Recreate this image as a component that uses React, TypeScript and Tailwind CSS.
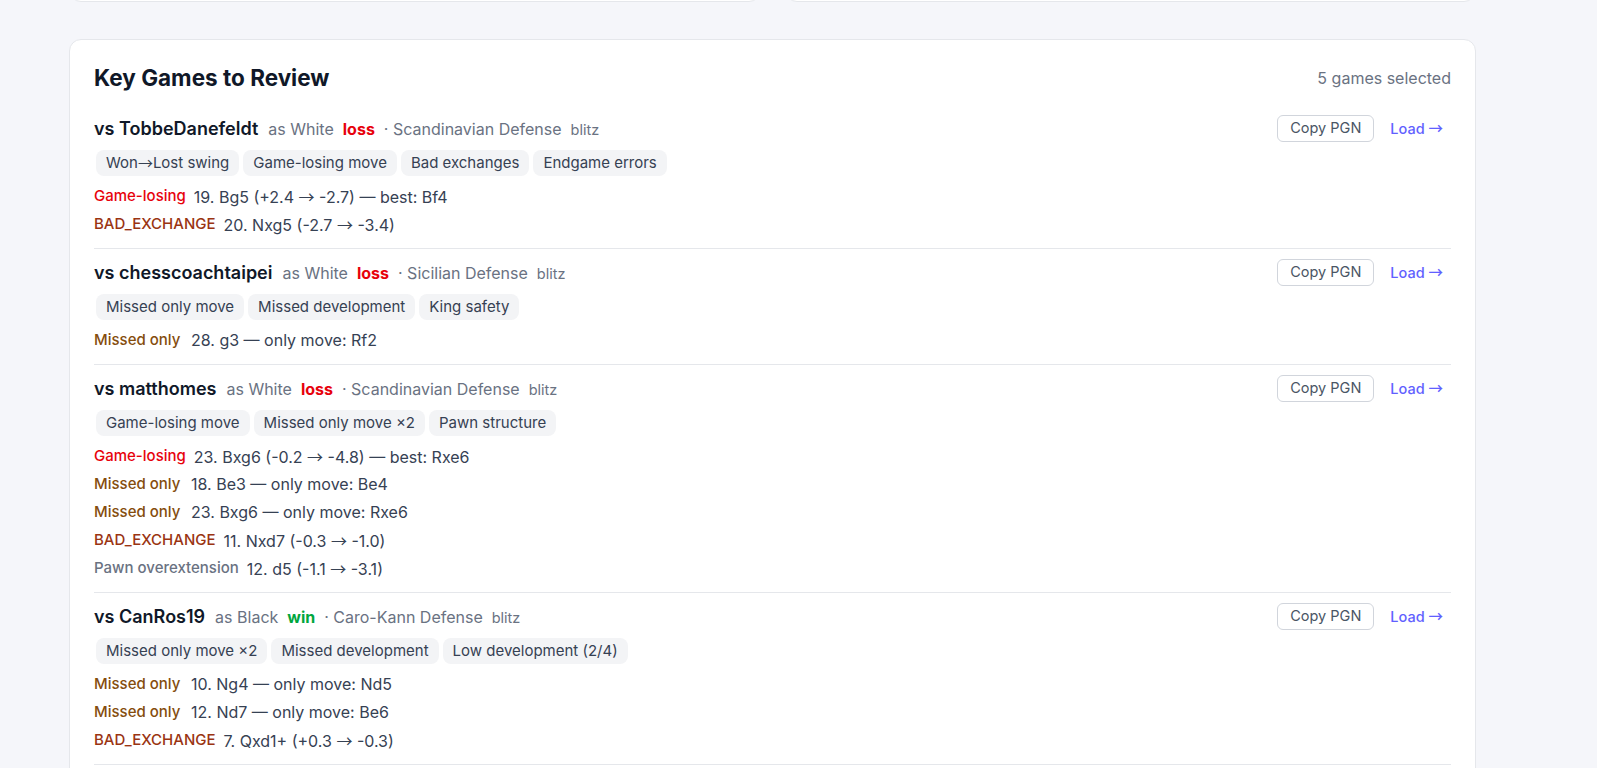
import React from "react";

type Line = { label: string; cls: string; text: string };
type Game = {
  opp: string;
  color: string;
  result: "loss" | "win";
  opening: string;
  speed: string;
  tags: string[];
  lines: Line[];
};

const GL = "text-red-600";
const BX = "text-[#9a3412]";
const MO = "text-[#854d0e]";
const PO = "text-gray-500";

const games: Game[] = [
  {
    opp: "TobbeDanefeldt",
    color: "White",
    result: "loss",
    opening: "Scandinavian Defense",
    speed: "blitz",
    tags: ["Won→Lost swing", "Game-losing move", "Bad exchanges", "Endgame errors"],
    lines: [
      { label: "Game-losing", cls: GL, text: "19. Bg5 (+2.4 → -2.7) — best: Bf4" },
      { label: "BAD_EXCHANGE", cls: BX, text: "20. Nxg5 (-2.7 → -3.4)" },
    ],
  },
  {
    opp: "chesscoachtaipei",
    color: "White",
    result: "loss",
    opening: "Sicilian Defense",
    speed: "blitz",
    tags: ["Missed only move", "Missed development", "King safety"],
    lines: [{ label: "Missed only", cls: MO, text: "28. g3 — only move: Rf2" }],
  },
  {
    opp: "matthomes",
    color: "White",
    result: "loss",
    opening: "Scandinavian Defense",
    speed: "blitz",
    tags: ["Game-losing move", "Missed only move ×2", "Pawn structure"],
    lines: [
      { label: "Game-losing", cls: GL, text: "23. Bxg6 (-0.2 → -4.8) — best: Rxe6" },
      { label: "Missed only", cls: MO, text: "18. Be3 — only move: Be4" },
      { label: "Missed only", cls: MO, text: "23. Bxg6 — only move: Rxe6" },
      { label: "BAD_EXCHANGE", cls: BX, text: "11. Nxd7 (-0.3 → -1.0)" },
      { label: "Pawn overextension", cls: PO, text: "12. d5 (-1.1 → -3.1)" },
    ],
  },
  {
    opp: "CanRos19",
    color: "Black",
    result: "win",
    opening: "Caro-Kann Defense",
    speed: "blitz",
    tags: ["Missed only move ×2", "Missed development", "Low development (2/4)"],
    lines: [
      { label: "Missed only", cls: MO, text: "10. Ng4 — only move: Nd5" },
      { label: "Missed only", cls: MO, text: "12. Nd7 — only move: Be6" },
      { label: "BAD_EXCHANGE", cls: BX, text: "7. Qxd1+ (+0.3 → -0.3)" },
    ],
  },
];

const ARROW_FONT = "'Noto Sans CJK JP', sans-serif";

function WithArrows({ text }: { text: string }) {
  const parts = text.split("→");
  return (
    <>
      {parts.map((p, i) => (
        <React.Fragment key={i}>
          {p}
          {i < parts.length - 1 && <span style={{ fontFamily: ARROW_FONT }}>→</span>}
        </React.Fragment>
      ))}
    </>
  );
}

function GameRow({ g }: { g: Game }) {
  return (
    <div className="border-b border-gray-200 pt-[9px] pb-3">
      <div className="flex h-7 items-center justify-between">
        <div className="flex items-baseline">
          <span className="text-[18px] font-semibold text-gray-900">vs {g.opp}</span>
          <span className="ml-[10px] text-[16px] text-gray-500">as {g.color}</span>
          <span
            className={
              g.result === "loss"
                ? "ml-[9px] text-[16px] font-bold text-red-600"
                : "ml-[9px] text-[16px] font-bold text-green-600"
            }
          >
            {g.result}
          </span>
          <span className="ml-[9px] text-[16px] text-gray-500">· {g.opening}</span>
          <span className="ml-[9px] text-[14.5px] text-gray-500">{g.speed}</span>
        </div>
        <div className="flex items-center gap-2">
          <button className="h-[27px] rounded-md border border-gray-300 bg-white px-3 text-[14.5px] text-gray-600">
            Copy PGN
          </button>
          <button className="px-2 text-[14.5px] font-medium text-indigo-500">
            <WithArrows text="Load →" />
          </button>
        </div>
      </div>
      <div className="mt-2 ml-0.5 flex flex-wrap gap-1">
        {g.tags.map((t) => (
          <span
            key={t}
            className="flex h-[26px] items-center rounded-lg bg-gray-100 px-[10px] text-[15px] text-gray-700"
          >
            <WithArrows text={t} />
          </span>
        ))}
      </div>
      <div className="mt-2 flex flex-col gap-1">
        {g.lines.map((l, i) => (
          <div key={i} className="flex h-6 items-center gap-2">
            <span className={"min-w-[89px] text-[15px] font-medium " + l.cls}>{l.label}</span>
            <span className="text-[16px] text-gray-700">
              <WithArrows text={l.text} />
            </span>
          </div>
        ))}
      </div>
    </div>
  );
}

export default function App() {
  return (
    <div
      className="min-h-screen overflow-hidden bg-[#f5f6fa] pl-[69px]"
      style={{ fontFamily: "Inter, 'Noto Sans', sans-serif" }}
    >
      <div className="w-[1407px]">
        <div className="-mt-[198px] grid grid-cols-2 gap-6">
          <div className="h-[200px] rounded-xl border border-gray-200 bg-white" />
          <div className="h-[200px] rounded-xl border border-gray-200 bg-white" />
        </div>
        <div className="mt-[37px] rounded-xl border border-gray-200 bg-white px-6 pt-6 pb-10">
          <div className="mb-[13px] flex items-center justify-between">
            <h2 className="text-[22.5px] font-bold leading-7 text-gray-900">Key Games to Review</h2>
            <span className="text-[16px] text-gray-500">5 games selected</span>
          </div>
          {games.map((g) => (
            <GameRow key={g.opp} g={g} />
          ))}
          <div className="h-40" />
        </div>
      </div>
    </div>
  );
}
